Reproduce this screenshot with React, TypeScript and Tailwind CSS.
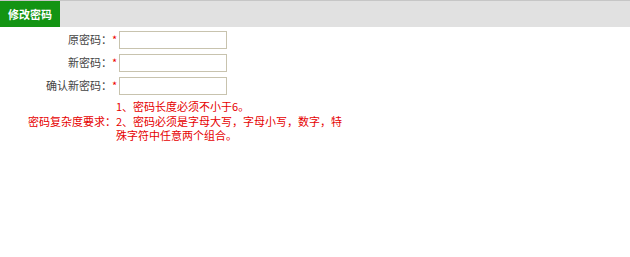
const font = { fontFamily: '"Microsoft YaHei", "Noto Sans CJK SC", sans-serif' };

const PasswordRow = ({ label }: { label: string }) => (
  <div className="flex h-[23px] items-center">
    <span className="w-[112px] text-right text-[11px] text-[#444]">{label}</span>
    <span className="w-[7px] text-[11px] text-[#e00]">*</span>
    <input type="password" className="h-[18px] w-[108px] border border-[#c8c3ae] bg-white outline-none" />
  </div>
);

export default function App() {
  return (
    <div className="h-[257px] w-[630px] bg-white" style={font}>
      <div className="flex h-[27px] border-t border-[#c6c6c6] bg-[#e1e1e1]">
        <div className="flex w-[60px] items-center justify-center bg-[#139413] text-[11px] font-bold text-white">
          修改密码
        </div>
      </div>
      <div className="pt-[1px]">
        <PasswordRow label="原密码：" />
        <PasswordRow label="新密码：" />
        <PasswordRow label="确认新密码：" />
        <div className="flex pt-[2px] text-[11px] leading-[14.5px] text-[#e60000]">
          <span className="w-[116px] self-center pl-[28px]">密码复杂度要求：</span>
          <div className="w-[228px]">
            <p>1、密码长度必须不小于6。</p>
            <p>2、密码必须是字母大写，字母小写，数字，特殊字符中任意两个组合。</p>
          </div>
        </div>
      </div>
    </div>
  );
}
